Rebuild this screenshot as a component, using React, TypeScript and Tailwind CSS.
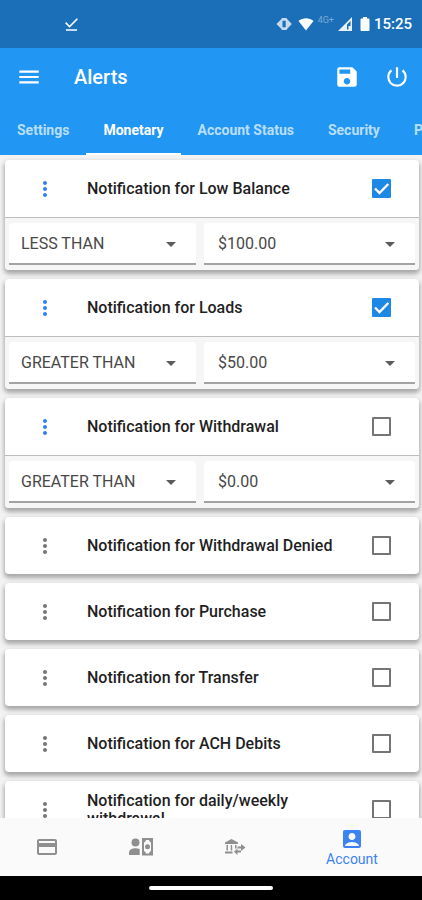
import React, { useState } from "react";
import {
  MdAccountBox,
  MdCreditCard,
  MdDownloadDone,
  MdMenu,
  MdMoreVert,
  MdPowerSettingsNew,
  MdSave,
} from "react-icons/md";

type Alert = {
  id: string;
  label: string;
  enabled: boolean;
  comparison?: string;
  amount?: string;
};

const ALERTS: Alert[] = [
  { id: "low-balance", label: "Notification for Low Balance", enabled: true, comparison: "LESS THAN", amount: "$100.00" },
  { id: "loads", label: "Notification for Loads", enabled: true, comparison: "GREATER THAN", amount: "$50.00" },
  { id: "withdrawal", label: "Notification for Withdrawal", enabled: false, comparison: "GREATER THAN", amount: "$0.00" },
  { id: "denied", label: "Notification for Withdrawal Denied", enabled: false },
  { id: "purchase", label: "Notification for Purchase", enabled: false },
  { id: "transfer", label: "Notification for Transfer", enabled: false },
  { id: "ach", label: "Notification for ACH Debits", enabled: false },
  { id: "limits", label: "Notification for daily/weekly withdrawal", enabled: false },
];

const COMPARISONS = ["LESS THAN", "GREATER THAN"];
const AMOUNTS = ["$0.00", "$50.00", "$100.00"];
const TABS = ["Settings", "Monetary", "Account Status", "Security", "Profile"];

function StatusBar() {
  return (
    <div className="flex h-12 shrink-0 items-center bg-[#1a6fb8] pr-2.5 pl-[62px] text-white">
      <MdDownloadDone className="size-[19px]" stroke="currentColor" />
      <div className="ml-auto flex items-center">
        <svg viewBox="0 0 16 14" className="h-3.5 w-4 opacity-75" fill="currentColor">
          <path fillRule="evenodd" d="M6 1h4.500l1 1.500L15.800 7l-4.300 4.500-1 1.500H6l-1-1.500L.4 7 5 2.500zM6.500 3.800v6.400h3.200V3.800z" />
        </svg>
        <svg viewBox="0 0 16 14" className="ml-1.5 h-3.5 w-4" fill="currentColor">
          <path d="M8 13.500.5 4C4.800.3 11.200.3 15.500 4z" />
        </svg>
        <span className="ml-1 self-start pt-0.5 text-[9px] leading-none opacity-40">4G+</span>
        <svg viewBox="0 0 14 14" className="ml-1 h-3.5 w-3.5 opacity-90" fill="currentColor">
          <path fillRule="evenodd" d="M14 0v14H0zM12.500 4 9 7.500v5h1.500V9h2z" />
        </svg>
        <svg viewBox="0 0 10 14" className="ml-2 h-3.5 w-2.5" fill="currentColor">
          <path d="M3 0h4v1.500h1.500a1 1 0 0 1 1 1V13a1 1 0 0 1-1 1h-7a1 1 0 0 1-1-1V2.500a1 1 0 0 1 1-1H3z" />
        </svg>
        <span className="ml-1 text-[15px] leading-5 font-medium">15:25</span>
      </div>
    </div>
  );
}

function Dropdown({ label, value, options, wide }: { label: string; value: string; options: string[]; wide?: boolean }) {
  return (
    <div className={wide ? "relative flex-[211]" : "relative flex-[187]"}>
      <select
        aria-label={label}
        defaultValue={value}
        className={
          (wide ? "pl-3.5" : "pl-3") +
          " block h-[42px] w-full appearance-none rounded-t border-b-2 border-[#a3a3a3] bg-white pt-0.5 pr-9 text-base text-[#484848] outline-none"
        }
      >
        {options.map((option) => (
          <option key={option}>{option}</option>
        ))}
      </select>
      <svg
        viewBox="0 0 10 5"
        className="pointer-events-none absolute top-[19px] right-5 h-[5px] w-2.5 fill-[#5c5c5c]"
        aria-hidden="true"
      >
        <path d="M0 0h10L5 5z" />
      </svg>
    </div>
  );
}

function AlertCard({ alert }: { alert: Alert }) {
  const [enabled, setEnabled] = useState(alert.enabled);
  const hasRule = alert.comparison !== undefined;
  return (
    <li className="rounded bg-white shadow-[0_3px_4px_1px_rgba(0,0,0,0.3)]">
      <div className="flex h-[57px] items-center pr-7 pl-7">
        <button
          type="button"
          aria-label={"Options for " + alert.label}
          className={hasRule ? "text-[#2f80f5]" : "text-[#757575]"}
        >
          <MdMoreVert className="size-6" />
        </button>
        <label htmlFor={alert.id} className="mr-6 ml-[30px] flex-1 text-base leading-[18px] font-medium text-[#1f1f1f]">
          {alert.label}
        </label>
        <span className="relative size-[19px]">
          <input
            id={alert.id}
            type="checkbox"
            checked={enabled}
            onChange={(event) => setEnabled(event.target.checked)}
            className="peer block size-[19px] appearance-none rounded-[1px] border-2 border-[#757575] bg-white checked:border-[#1e88e5] checked:bg-[#1e88e5]"
          />
          <svg
            viewBox="0 0 19 19"
            className="pointer-events-none absolute inset-0 hidden size-[19px] peer-checked:block"
            fill="none"
            stroke="white"
            strokeWidth="2.300"
          >
            <path d="m3 9.500 4.500 4.500L16.300 5" />
          </svg>
        </span>
      </div>
      {hasRule && (
        <div className="flex gap-2 rounded-b border-t border-[#bdbdbd] bg-[#f6f6f6] px-1 py-[5px]">
          <Dropdown label="Comparison" value={alert.comparison ?? ""} options={COMPARISONS} />
          <Dropdown label="Amount" value={alert.amount ?? ""} options={AMOUNTS} wide />
        </div>
      )}
    </li>
  );
}

function PayPersonIcon() {
  return (
    <svg viewBox="0 0 26 20" className="h-5 w-[26px]" fill="currentColor">
      <circle cx="7.500" cy="5.500" r="4" />
      <path d="M1 18v-2.500c0-3 3.500-4.300 6.500-4.300 1.600 0 3 .3 4.200.9V18z" />
      <path fillRule="evenodd" d="M14 1h11v17.500H14zM16 5.500v8.500a3 3 0 0 1 2 2.500h3a3 3 0 0 1 2-2.500V5.500a3 3 0 0 1-2-2.500h-3a3 3 0 0 1-2 2.500z" />
      <circle cx="19.500" cy="9.750" r="2.500" />
    </svg>
  );
}

function BankTransferIcon() {
  return (
    <svg viewBox="0 0 22 16" className="h-4 w-[22px]" fill="currentColor">
      <path d="M7.500 0 14 3.500V5H1V3.500zM2.500 6h1.500v5.500H2.500zM6.700 6h1.500v5.500H6.700zM11 6h1.500v3.500H11zM1 12.500h7.500V14.500H1z" />
      <path d="M17 5 21.500 8.500 17 12V9.500h-3.500v-2H17zM13.500 9.500v2H17v2h-3.500V16L10 12.700z" />
    </svg>
  );
}

export default function App() {
  const [tab, setTab] = useState("Monetary");
  return (
    <div className="flex h-screen flex-col overflow-hidden bg-[#f2f2f2] font-[Roboto,sans-serif]">
      <StatusBar />
      <header className="shrink-0 bg-[#2196f3] text-white">
        <div className="flex h-[58px] items-center pr-3 pl-4">
          <button type="button" aria-label="Open menu">
            <MdMenu className="size-[26px]" />
          </button>
          <h1 className="ml-8 text-xl font-medium">Alerts</h1>
          <button type="button" aria-label="Save" className="ml-auto">
            <MdSave className="size-[26px]" />
          </button>
          <button type="button" aria-label="Log out" className="ml-6">
            <MdPowerSettingsNew className="size-[26px]" />
          </button>
        </div>
        <div role="tablist" className="flex h-[49px] overflow-hidden">
          {TABS.map((name) => (
            <button
              key={name}
              type="button"
              role="tab"
              aria-selected={tab === name}
              onClick={() => setTab(name)}
              className={
                tab === name
                  ? "shrink-0 border-b-2 border-white px-[17px] text-sm font-bold"
                  : "shrink-0 border-b-2 border-transparent px-[17px] text-sm font-bold text-white/70"
              }
            >
              {name}
            </button>
          ))}
        </div>
      </header>
      <main className="min-h-0 flex-1 overflow-hidden pt-[5px] pr-[3px] pl-[5px]">
        <ul className="flex flex-col gap-[9px]">
          {ALERTS.map((alert) => (
            <AlertCard key={alert.id} alert={alert} />
          ))}
        </ul>
      </main>
      <nav className="relative grid h-[58px] shrink-0 grid-cols-[94fr_94fr_94fr_140fr] bg-[#fafafa] text-[#8f8f8f]">
        <button type="button" aria-label="Cards" className="flex items-center justify-center">
          <MdCreditCard className="size-6" />
        </button>
        <button type="button" aria-label="Pay a person" className="flex items-center justify-center">
          <PayPersonIcon />
        </button>
        <button type="button" aria-label="Bank transfer" className="flex items-center justify-center">
          <BankTransferIcon />
        </button>
        <button type="button" className="flex flex-col items-center justify-center text-sm leading-4 text-[#3b82f6]">
          <MdAccountBox className="size-6" />
          Account
        </button>
      </nav>
      <div className="flex h-6 shrink-0 items-center justify-center bg-black">
        <div className="h-1 w-[124px] rounded-full bg-white" />
      </div>
    </div>
  );
}
